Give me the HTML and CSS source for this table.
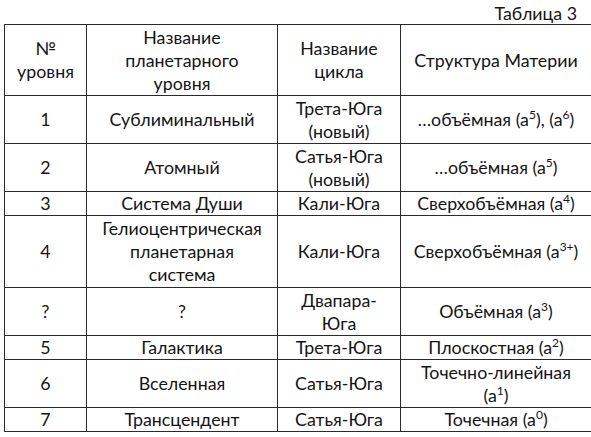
FILE: index.html
```html
<!DOCTYPE html>
<html lang="ru">
<head>
<meta charset="utf-8">
<link rel="stylesheet" href="styles.css">
</head>
<body>
<div class="caption">Таблица 3</div>
<table class="levels">
  <colgroup>
    <col class="c1"><col class="c2"><col class="c3"><col class="c4">
  </colgroup>
  <tr class="r-head">
    <td>№<br>уровня</td>
    <td>Название<br>планетарного<br>уровня</td>
    <td>Название<br>цикла</td>
    <td>Структура Материи</td>
  </tr>
  <tr class="r2">
    <td>1</td>
    <td>Сублиминальный</td>
    <td>Трета-Юга<br>(новый)</td>
    <td>…объёмная (а<sup>5</sup>), (а<sup>6</sup>)</td>
  </tr>
  <tr class="r2">
    <td>2</td>
    <td>Атомный</td>
    <td>Сатья-Юга<br>(новый)</td>
    <td>…объёмная (а<sup>5</sup>)</td>
  </tr>
  <tr class="r1">
    <td>3</td>
    <td>Система Души</td>
    <td>Кали-Юга</td>
    <td>Сверхобъёмная (а<sup>4</sup>)</td>
  </tr>
  <tr class="r3">
    <td>4</td>
    <td>Гелиоцентрическая<br>планетарная<br>система</td>
    <td>Кали-Юга</td>
    <td>Сверхобъёмная (а<sup>3+</sup>)</td>
  </tr>
  <tr class="r2">
    <td>?</td>
    <td>?</td>
    <td>Двапара-<br>Юга</td>
    <td>Объёмная (а<sup>3</sup>)</td>
  </tr>
  <tr class="r1">
    <td>5</td>
    <td>Галактика</td>
    <td>Трета-Юга</td>
    <td>Плоскостная (а<sup>2</sup>)</td>
  </tr>
  <tr class="r2">
    <td>6</td>
    <td>Вселенная</td>
    <td>Сатья-Юга</td>
    <td>Точечно-линейная<br>(а<sup>1</sup>)</td>
  </tr>
  <tr class="r1">
    <td>7</td>
    <td>Трансцендент</td>
    <td>Сатья-Юга</td>
    <td>Точечная (а<sup>0</sup>)</td>
  </tr>
</table>
</body>
</html>
```
FILE: styles.css
```css
html, body {
  margin: 0;
  padding: 0;
  background: #ffffff;
}
body {
  width: 591px;
  height: 437px;
  overflow: hidden;
  font-family: "Lato", "Open Sans", "Liberation Sans", sans-serif;
  font-size: 17.8px;
  color: #141414;
}
.caption {
  height: 24px;
  line-height: 26px;
  text-align: right;
  padding-right: 14px;
}
.levels {
  margin-left: 4px;
  border-collapse: collapse;
  table-layout: fixed;
  width: 587px;
}
.c1 { width: 82px; }
.c2 { width: 191px; }
.c3 { width: 123px; }
.c4 { width: 191px; }
.levels td {
  border: 1px solid #2a2a2a;
  text-align: center;
  vertical-align: middle;
  padding: 0 2px;
  line-height: 23px;
  box-sizing: border-box;
}
.r-head td { height: 71px; }
.r2 td { height: 48px; }
.r1 td { height: 24px; }
.r3 td { height: 72px; }
.levels sup {
  font-size: 12px;
  line-height: 0;
  vertical-align: 7px;
}
```
